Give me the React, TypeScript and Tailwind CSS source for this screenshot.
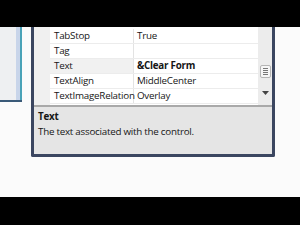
import React from 'react';

const rows: { name: string; value: string; bold?: boolean; sel?: boolean }[] = [
  { name: 'TabStop', value: 'True' },
  { name: 'Tag', value: '' },
  { name: 'Text', value: '&Clear Form', bold: true, sel: true },
  { name: 'TextAlign', value: 'MiddleCenter' },
  { name: 'TextImageRelation', value: 'Overlay' },
];

const App: React.FC = () => {
  return (
    <div className="w-[300px] h-[225px] flex flex-col bg-black overflow-hidden" style={{ fontFamily: '"Open Sans", "Noto Sans", sans-serif' }}>
      {/* top black band */}
      <div className="h-[27px] shrink-0 bg-black"></div>

      {/* screen area */}
      <div className="h-[170px] shrink-0 bg-[#fbfbfb] flex">
        {/* window fragment on the left */}
        <div className="w-[22px] h-[75px] shrink-0 flex bg-[#eef0f2] border-b-2 border-[#3a5a78]">
          <div className="w-[16px]"></div>
          <div className="w-[4px] bg-[#c8d5ea]"></div>
          <div className="w-[2px] bg-[#4aa3b8]"></div>
        </div>

        <div className="w-[9px] shrink-0"></div>

        {/* properties panel */}
        <div className="w-[244px] h-[130px] shrink-0 flex flex-col border-l-[3px] border-r-[3px] border-b-[3px] border-[#3b4660] rounded-b-[2px] bg-white">
          {/* grid */}
          <div className="h-[78px] shrink-0 flex">
            <div className="w-[16px] shrink-0 bg-[#f0f0f0]"></div>
            <div className="flex-1 flex flex-col pt-[2px]">
              {rows.map((r) => (
                <div key={r.name} className="h-[15px] flex border-b border-[#ececec] text-[9.8px] tracking-[-0.25px] leading-[14px] text-[#161616]">
                  <div className={`w-[84px] shrink-0 pl-[4px] border-r border-[#e3e3e3] whitespace-nowrap ${r.sel ? 'bg-[#f1f1f1]' : ''}`}>{r.name}</div>
                  <div className={`flex-1 pl-[3px] whitespace-nowrap ${r.bold ? 'font-bold' : ''}`}>{r.value}</div>
                </div>
              ))}
            </div>
            {/* scrollbar */}
            <div className="w-[14px] shrink-0 bg-[#ececec] flex flex-col items-center">
              <div className="h-[38px]"></div>
              <div className="w-[11px] h-[13px] bg-[#f6f6f6] border border-[#b5b5b5] rounded-[2px] flex flex-col items-center justify-center gap-[1px]">
                <div className="w-[5px] h-px bg-[#777]"></div>
                <div className="w-[5px] h-px bg-[#777]"></div>
                <div className="w-[5px] h-px bg-[#777]"></div>
                <div className="w-[5px] h-px bg-[#777]"></div>
              </div>
              <div className="h-[13px]"></div>
              <svg width="7" height="4" viewBox="0 0 7 4">
                <path d="M0 0 L7 0 L3.5 4 Z" fill="#444" />
              </svg>
            </div>
          </div>

          {/* divider */}
          <div className="h-[2px] shrink-0 bg-[#a9a9a9]"></div>

          {/* description */}
          <div className="flex-1 bg-[#e5e5e5] px-[4px] pt-[3px] text-[9.8px] tracking-[-0.25px] text-[#161616]">
            <div className="font-bold leading-[14px]">Text</div>
            <div className="leading-[14px] mt-[1px]">The text associated with the control.</div>
          </div>
        </div>
      </div>

      {/* bottom black band */}
      <div className="flex-1 bg-black"></div>
    </div>
  );
};

export default App;
